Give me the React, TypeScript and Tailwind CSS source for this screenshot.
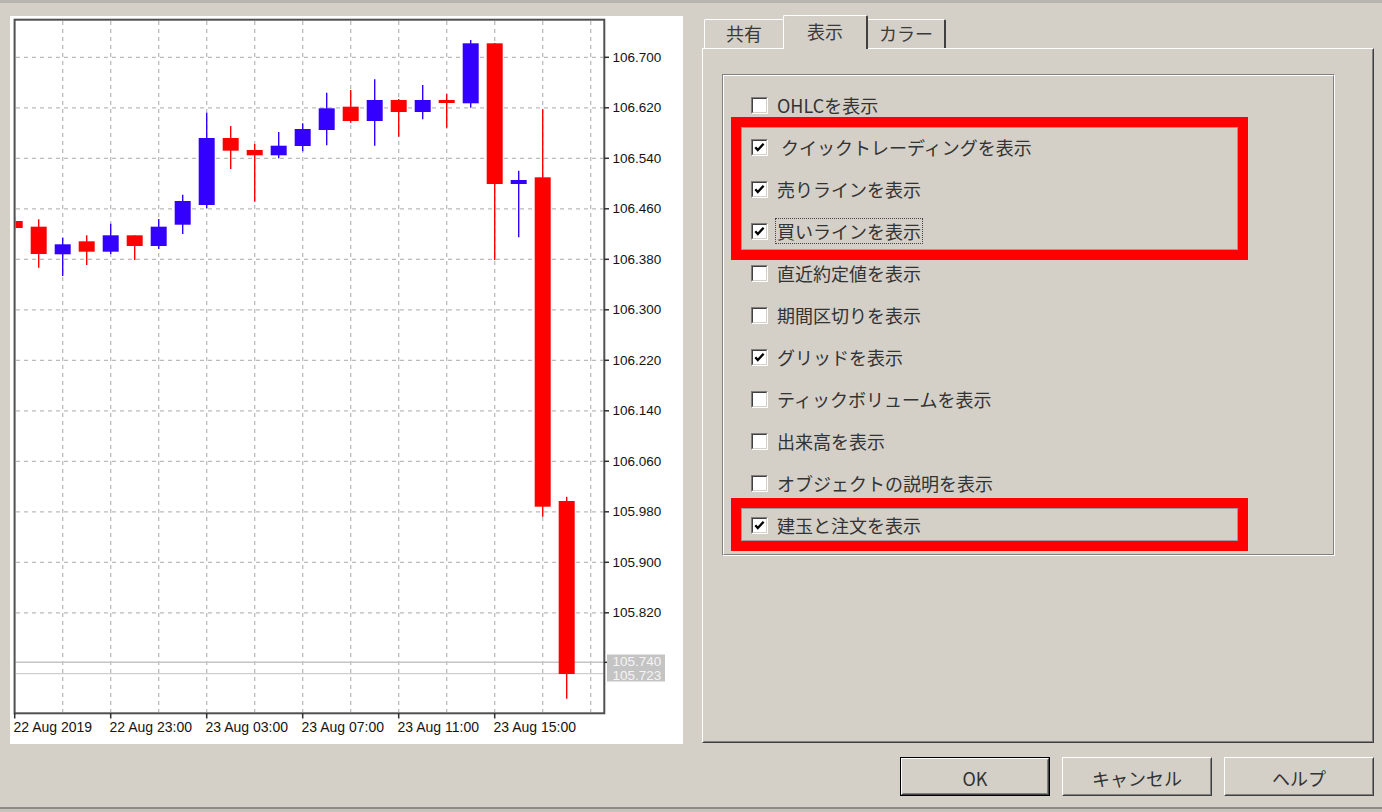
import React from "react";

type Candle = { up: boolean; bt: number; bb: number; wt: number; wb: number };

// Price → pixel rows for each H1 bar, left to right
const CANDLES: Candle[] = [
  { up: false, bt: 221, bb: 228, wt: 217, wb: 231 },
  { up: false, bt: 226.7, bb: 254, wt: 219.3, wb: 267.7 },
  { up: true, bt: 244.3, bb: 254.3, wt: 237.7, wb: 276 },
  { up: false, bt: 241.3, bb: 251.7, wt: 235.3, wb: 265 },
  { up: true, bt: 235.3, bb: 251.7, wt: 223.7, wb: 254 },
  { up: false, bt: 235.3, bb: 246, wt: 235.3, wb: 260 },
  { up: true, bt: 226.7, bb: 246, wt: 219, wb: 249 },
  { up: true, bt: 201, bb: 224.7, wt: 194.7, wb: 234 },
  { up: true, bt: 138, bb: 205, wt: 112.7, wb: 208.3 },
  { up: false, bt: 138, bb: 150.7, wt: 126, wb: 169 },
  { up: false, bt: 150, bb: 155.3, wt: 144, wb: 201.7 },
  { up: true, bt: 145.7, bb: 155.3, wt: 132, wb: 158.3 },
  { up: true, bt: 129, bb: 146, wt: 123.3, wb: 151.3 },
  { up: true, bt: 108.3, bb: 130, wt: 92.7, wb: 145.3 },
  { up: false, bt: 106.7, bb: 121, wt: 90, wb: 122.7 },
  { up: true, bt: 100, bb: 121, wt: 79.3, wb: 145.7 },
  { up: false, bt: 100, bb: 112, wt: 99, wb: 136.7 },
  { up: true, bt: 100, bb: 112, wt: 85, wb: 119.3 },
  { up: false, bt: 100, bb: 103, wt: 94, wb: 127.7 },
  { up: true, bt: 43.3, bb: 103.3, wt: 40, wb: 107.7 },
  { up: false, bt: 43.3, bb: 184, wt: 43, wb: 260 },
  { up: true, bt: 180, bb: 184, wt: 170.7, wb: 237.3 },
  { up: false, bt: 177.3, bb: 506.7, wt: 109.3, wb: 516.7 },
  { up: false, bt: 501, bb: 674, wt: 496.7, wb: 698.7 },
];

const PRICES = [
  "106.700",
  "106.620",
  "106.540",
  "106.460",
  "106.380",
  "106.300",
  "106.220",
  "106.140",
  "106.060",
  "105.980",
  "105.900",
  "105.820",
];

const TIMES: [string, number][] = [
  ["22 Aug 2019", 14.7],
  ["22 Aug 23:00", 110.7],
  ["23 Aug 03:00", 206.7],
  ["23 Aug 07:00", 302.7],
  ["23 Aug 11:00", 398.7],
  ["23 Aug 15:00", 494.7],
];

const BULL = "#3300ff";
const BEAR = "#ff0000";

function PriceChart() {
  const priceY = (i: number) => 57.3 + 50.5 * i;
  const gridX = Array.from({ length: 12 }, (_, j) => 62.7 + 48 * j);
  const gridY = Array.from({ length: 12 }, (_, i) => priceY(i));
  return (
    <svg
      width={673}
      height={728}
      viewBox="10 16 673 728"
      className="block font-['Liberation_Sans',Arial,sans-serif]"
    >
      <defs>
        <clipPath id="plot-area">
          <rect x={15.6} y={20.7} width={587.8} height={691.7} />
        </clipPath>
      </defs>

      {/* dashed grid */}
      <g stroke="#bcbcbc" strokeWidth={1.3} strokeDasharray="4 4">
        {gridX.map((x) => (
          <line key={`gx${x}`} x1={x} y1={21} x2={x} y2={712} />
        ))}
        {gridY.map((y) => (
          <line key={`gy${y}`} x1={16} y1={y} x2={603} y2={y} />
        ))}
      </g>

      {/* bid / ask lines */}
      <line x1={15.6} y1={662.3} x2={603.4} y2={662.3} stroke="#c4c4c4" strokeWidth={1.6} />
      <line x1={15.6} y1={673.6} x2={603.4} y2={673.6} stroke="#d0d0d0" strokeWidth={1.4} />

      {/* candles */}
      <g clipPath="url(#plot-area)">
        {CANDLES.map((c, k) => {
          const cx = 14.7 + 24 * k;
          const col = c.up ? BULL : BEAR;
          return (
            <g key={k}>
              <line x1={cx} y1={c.wt} x2={cx} y2={c.wb} stroke={col} strokeWidth={1.4} />
              <rect x={cx - 8} y={c.bt} width={16} height={Math.max(c.bb - c.bt, 2.5)} fill={col} />
            </g>
          );
        })}
      </g>

      {/* plot frame */}
      <rect x={14.6} y={19.7} width={589.7} height={693.6} fill="none" stroke="#505050" strokeWidth={2} />

      {/* price axis */}
      <g fill="#141414" className="text-[13.5px]">
        {PRICES.map((p, i) => (
          <g key={p}>
            <line x1={604} y1={priceY(i)} x2={609} y2={priceY(i)} stroke="#303030" strokeWidth={1.5} />
            <text x={612.5} y={priceY(i)} dominantBaseline="central">
              {p}
            </text>
          </g>
        ))}
        <line x1={604} y1={662.3} x2={608} y2={662.3} stroke="#303030" strokeWidth={1.5} />
        <rect x={607} y={654.5} width={58} height={27} fill="#c4c4c4" />
        <text x={612.5} y={661.6} dominantBaseline="central" fill="#f4f4f4">
          105.740
        </text>
        <text x={612.5} y={675} dominantBaseline="central" fill="#f4f4f4">
          105.723
        </text>
      </g>

      {/* time axis */}
      <g fill="#141414" className="text-[14px]">
        {TIMES.map(([t, x]) => (
          <g key={t}>
            <line x1={x} y1={713} x2={x} y2={718.5} stroke="#303030" strokeWidth={1.5} />
            <text x={x - 1.2} y={727} dominantBaseline="central">
              {t}
            </text>
          </g>
        ))}
      </g>
    </svg>
  );
}

function CheckBox({ checked }: { checked: boolean }) {
  return (
    <div className="w-[17px] h-[17px] shrink-0 border border-t-[#808080] border-l-[#808080] border-r-white border-b-white">
      <div className="relative w-full h-full border border-t-[#404040] border-l-[#404040] border-r-[#d4d0c8] border-b-[#d4d0c8] bg-white">
        {checked && (
          <svg viewBox="0 0 13 13" className="absolute inset-0 w-[13px] h-[13px]">
            <polyline
              points="2.3,6.2 4.8,9 10.6,2.8"
              fill="none"
              stroke="#000"
              strokeWidth={2.3}
              strokeLinejoin="miter"
            />
          </svg>
        )}
      </div>
    </div>
  );
}

const OPTIONS: { label: string; checked: boolean; focus?: boolean }[] = [
  { label: "OHLCを表示", checked: false },
  { label: " クイックトレーディングを表示", checked: true },
  { label: "売りラインを表示", checked: true },
  { label: "買いラインを表示", checked: true, focus: true },
  { label: "直近約定値を表示", checked: false },
  { label: "期間区切りを表示", checked: false },
  { label: "グリッドを表示", checked: true },
  { label: "ティックボリュームを表示", checked: false },
  { label: "出来高を表示", checked: false },
  { label: "オブジェクトの説明を表示", checked: false },
  { label: "建玉と注文を表示", checked: true },
];

function WinButton({ label, isDefault }: { label: string; isDefault?: boolean }) {
  const face = (
    <div className="h-full border border-t-white border-l-white border-r-[#404040] border-b-[#404040]">
      <div className="h-full flex items-center justify-center pt-[3px] border border-t-[#d4d0c8] border-l-[#d4d0c8] border-r-[#808080] border-b-[#808080] text-[18px] text-[#333]">
        {label}
      </div>
    </div>
  );
  return (
    <div className={`w-[150px] h-[39px] ${isDefault ? "border border-black" : ""}`}>{face}</div>
  );
}

export default function App() {
  return (
    <div className="relative w-[1382px] h-[812px] overflow-hidden bg-[#d4d0c8] flex flex-col font-['Noto_Sans_CJK_JP','Noto_Sans',sans-serif]">
      <div className="h-[3px] bg-[#b8b5af]" />

      <div className="h-[741px] flex items-start">
        {/* chart window */}
        <div className="ml-[10px] mt-[13px] w-[673px] h-[728px] bg-white">
          <PriceChart />
        </div>

        {/* properties dialog */}
        <div className="ml-[19px] mt-[12px] w-[672px] flex flex-col">
          <div className="relative z-10 h-[33px] flex items-end text-[18px] leading-[22px] text-[#3a3a3a]">
            <div className="ml-[2px] w-[79px] h-[29px] flex justify-center pt-[2px] rounded-tl-[2px] border-t border-l border-white">
              共有
            </div>
            <div className="w-[85px] h-[34px] -mb-[1px] flex justify-center pt-[4px] bg-[#d4d0c8] rounded-t-[2px] border-t border-l border-white border-r-2 border-r-[#404040]">
              表示
            </div>
            <div className="w-[78px] h-[29px] flex justify-center pt-[2px] rounded-tr-[2px] border-t border-t-white border-r-2 border-r-[#404040]">
              カラー
            </div>
          </div>

          <div className="h-[695px] border border-t-white border-l-white border-r-[#404040] border-b-[#404040]">
            <div className="h-full border border-t-transparent border-l-transparent border-r-[#808080] border-b-[#808080]">
              <div className="ml-[18px] mt-[24px] w-[613px] h-[482px] border border-t-[#808080] border-l-[#808080] border-r-white border-b-white">
                <div className="h-full border border-t-white border-l-white border-r-[#808080] border-b-[#808080] pt-[8px] pl-[27px]">
                  {OPTIONS.map((o) => (
                    <div key={o.label} className="h-[42px] flex items-center">
                      <CheckBox checked={o.checked} />
                      <span
                        className={`ml-[9px] text-[18px] leading-[22px] text-[#333] whitespace-pre ${
                          o.focus ? "outline outline-1 outline-dotted outline-[#444] outline-offset-[1px]" : ""
                        }`}
                      >
                        {o.label}
                      </span>
                    </div>
                  ))}
                </div>
              </div>
            </div>
          </div>
        </div>
      </div>

      <div className="mt-[13px] h-[39px] flex justify-end gap-[12px] pr-[8px]">
        <WinButton label="OK" isDefault />
        <WinButton label="キャンセル" />
        <WinButton label="ヘルプ" />
      </div>

      <div className="flex-1" />
      <div className="h-[2px] bg-[#8c8a86]" />
      <div className="h-[3px] bg-[#c6c3bc]" />

      {/* red highlight frames */}
      <div className="absolute left-[731px] top-[117px] w-[517px] h-[143px] border-[10px] border-[#ff0000]">
        <div className="w-full h-full border border-[#9c9c9c]" />
      </div>
      <div className="absolute left-[731px] top-[498px] w-[517px] h-[53px] border-[10px] border-[#ff0000]">
        <div className="w-full h-full border border-[#9c9c9c]" />
      </div>
    </div>
  );
}
